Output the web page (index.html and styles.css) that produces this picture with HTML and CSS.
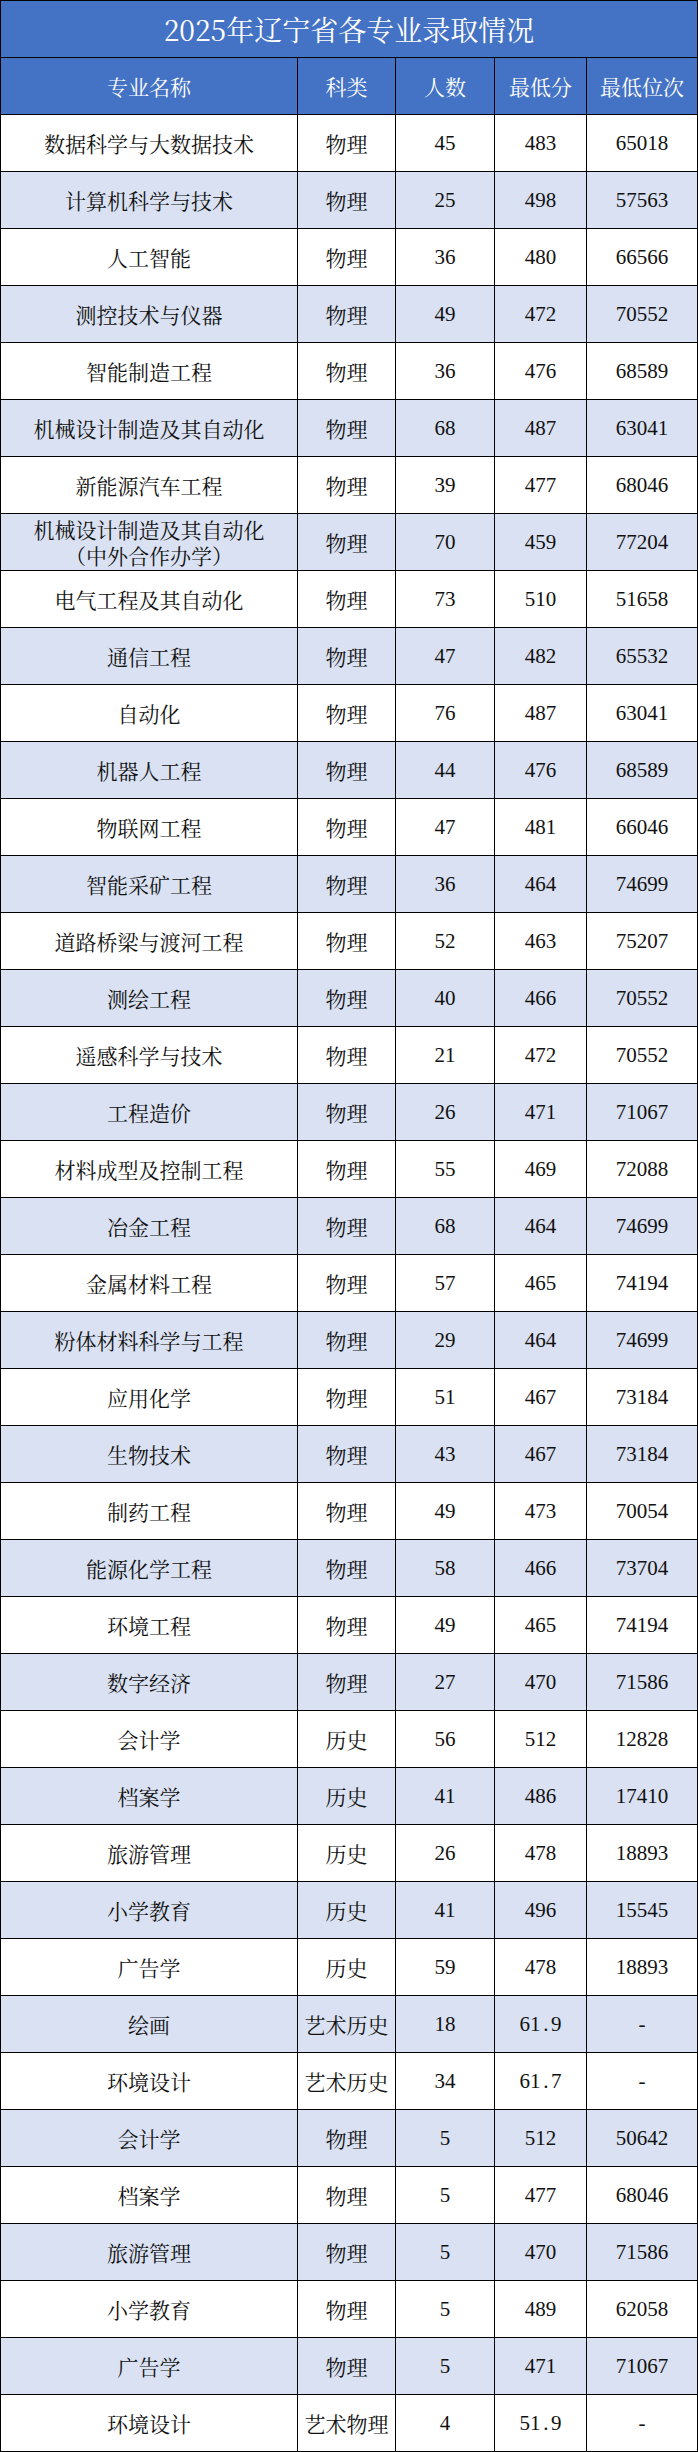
FILE: index.html
```html
<!DOCTYPE html>
<html lang="zh-CN">
<head>
<meta charset="utf-8">
<title>2025年辽宁省各专业录取情况</title>
<link rel="stylesheet" href="styles.css">
</head>
<body>
<div class="sheet">
  <div class="title">2025年辽宁省各专业录取情况</div>
  <div class="row head"><div>专业名称</div><div>科类</div><div>人数</div><div>最低分</div><div>最低位次</div></div>
  <div class="row"><div>数据科学与大数据技术</div><div>物理</div><div class="n">45</div><div class="n">483</div><div class="n">65018</div></div>
  <div class="row alt"><div>计算机科学与技术</div><div>物理</div><div class="n">25</div><div class="n">498</div><div class="n">57563</div></div>
  <div class="row"><div>人工智能</div><div>物理</div><div class="n">36</div><div class="n">480</div><div class="n">66566</div></div>
  <div class="row alt"><div>测控技术与仪器</div><div>物理</div><div class="n">49</div><div class="n">472</div><div class="n">70552</div></div>
  <div class="row"><div>智能制造工程</div><div>物理</div><div class="n">36</div><div class="n">476</div><div class="n">68589</div></div>
  <div class="row alt"><div>机械设计制造及其自动化</div><div>物理</div><div class="n">68</div><div class="n">487</div><div class="n">63041</div></div>
  <div class="row"><div>新能源汽车工程</div><div>物理</div><div class="n">39</div><div class="n">477</div><div class="n">68046</div></div>
  <div class="row alt"><div class="two">机械设计制造及其自动化<br>（中外合作办学）</div><div>物理</div><div class="n">70</div><div class="n">459</div><div class="n">77204</div></div>
  <div class="row"><div>电气工程及其自动化</div><div>物理</div><div class="n">73</div><div class="n">510</div><div class="n">51658</div></div>
  <div class="row alt"><div>通信工程</div><div>物理</div><div class="n">47</div><div class="n">482</div><div class="n">65532</div></div>
  <div class="row"><div>自动化</div><div>物理</div><div class="n">76</div><div class="n">487</div><div class="n">63041</div></div>
  <div class="row alt"><div>机器人工程</div><div>物理</div><div class="n">44</div><div class="n">476</div><div class="n">68589</div></div>
  <div class="row"><div>物联网工程</div><div>物理</div><div class="n">47</div><div class="n">481</div><div class="n">66046</div></div>
  <div class="row alt"><div>智能采矿工程</div><div>物理</div><div class="n">36</div><div class="n">464</div><div class="n">74699</div></div>
  <div class="row"><div>道路桥梁与渡河工程</div><div>物理</div><div class="n">52</div><div class="n">463</div><div class="n">75207</div></div>
  <div class="row alt"><div>测绘工程</div><div>物理</div><div class="n">40</div><div class="n">466</div><div class="n">70552</div></div>
  <div class="row"><div>遥感科学与技术</div><div>物理</div><div class="n">21</div><div class="n">472</div><div class="n">70552</div></div>
  <div class="row alt"><div>工程造价</div><div>物理</div><div class="n">26</div><div class="n">471</div><div class="n">71067</div></div>
  <div class="row"><div>材料成型及控制工程</div><div>物理</div><div class="n">55</div><div class="n">469</div><div class="n">72088</div></div>
  <div class="row alt"><div>冶金工程</div><div>物理</div><div class="n">68</div><div class="n">464</div><div class="n">74699</div></div>
  <div class="row"><div>金属材料工程</div><div>物理</div><div class="n">57</div><div class="n">465</div><div class="n">74194</div></div>
  <div class="row alt"><div>粉体材料科学与工程</div><div>物理</div><div class="n">29</div><div class="n">464</div><div class="n">74699</div></div>
  <div class="row"><div>应用化学</div><div>物理</div><div class="n">51</div><div class="n">467</div><div class="n">73184</div></div>
  <div class="row alt"><div>生物技术</div><div>物理</div><div class="n">43</div><div class="n">467</div><div class="n">73184</div></div>
  <div class="row"><div>制药工程</div><div>物理</div><div class="n">49</div><div class="n">473</div><div class="n">70054</div></div>
  <div class="row alt"><div>能源化学工程</div><div>物理</div><div class="n">58</div><div class="n">466</div><div class="n">73704</div></div>
  <div class="row"><div>环境工程</div><div>物理</div><div class="n">49</div><div class="n">465</div><div class="n">74194</div></div>
  <div class="row alt"><div>数字经济</div><div>物理</div><div class="n">27</div><div class="n">470</div><div class="n">71586</div></div>
  <div class="row"><div>会计学</div><div>历史</div><div class="n">56</div><div class="n">512</div><div class="n">12828</div></div>
  <div class="row alt"><div>档案学</div><div>历史</div><div class="n">41</div><div class="n">486</div><div class="n">17410</div></div>
  <div class="row"><div>旅游管理</div><div>历史</div><div class="n">26</div><div class="n">478</div><div class="n">18893</div></div>
  <div class="row alt"><div>小学教育</div><div>历史</div><div class="n">41</div><div class="n">496</div><div class="n">15545</div></div>
  <div class="row"><div>广告学</div><div>历史</div><div class="n">59</div><div class="n">478</div><div class="n">18893</div></div>
  <div class="row alt"><div>绘画</div><div>艺术历史</div><div class="n">18</div><div class="n">61<span class="dot">.</span>9</div><div class="n">-</div></div>
  <div class="row"><div>环境设计</div><div>艺术历史</div><div class="n">34</div><div class="n">61<span class="dot">.</span>7</div><div class="n">-</div></div>
  <div class="row alt"><div>会计学</div><div>物理</div><div class="n">5</div><div class="n">512</div><div class="n">50642</div></div>
  <div class="row"><div>档案学</div><div>物理</div><div class="n">5</div><div class="n">477</div><div class="n">68046</div></div>
  <div class="row alt"><div>旅游管理</div><div>物理</div><div class="n">5</div><div class="n">470</div><div class="n">71586</div></div>
  <div class="row"><div>小学教育</div><div>物理</div><div class="n">5</div><div class="n">489</div><div class="n">62058</div></div>
  <div class="row alt"><div>广告学</div><div>物理</div><div class="n">5</div><div class="n">471</div><div class="n">71067</div></div>
  <div class="row"><div>环境设计</div><div>艺术物理</div><div class="n">4</div><div class="n">51<span class="dot">.</span>9</div><div class="n">-</div></div>
</div>
</body>
</html>
```
FILE: styles.css
```css
html, body {
  margin: 0;
  padding: 0;
  background: #ffffff;
}
.sheet {
  width: 698px;
  box-sizing: border-box;
  background: #000000;
  padding: 1px;
  display: flex;
  flex-direction: column;
  gap: 1px;
  font-family: "Noto Serif CJK SC", "Liberation Serif", "Noto Sans CJK SC", serif;
  color: #111111;
}
.title {
  height: 56px;
  background: #4472c4;
  color: #ffffff;
  font-size: 28px;
  display: flex;
  align-items: center;
  justify-content: center;
}
.row {
  display: grid;
  grid-template-columns: 296px 97px 98px 91px 110px;
  gap: 1px;
  height: 56px;
}
.row > div {
  background: #ffffff;
  display: flex;
  align-items: center;
  justify-content: center;
  text-align: center;
  font-size: 21px;
  line-height: 26px;
}
.row.alt > div {
  background: #d9e1f2;
}
.row.head > div {
  background: #4472c4;
  color: #ffffff;
}
.row > div.n {
  font-family: "Liberation Serif", serif;
  font-size: 21px;
}
.dot {
  display: inline-block;
  width: 0.5em;
  text-align: center;
}
```
